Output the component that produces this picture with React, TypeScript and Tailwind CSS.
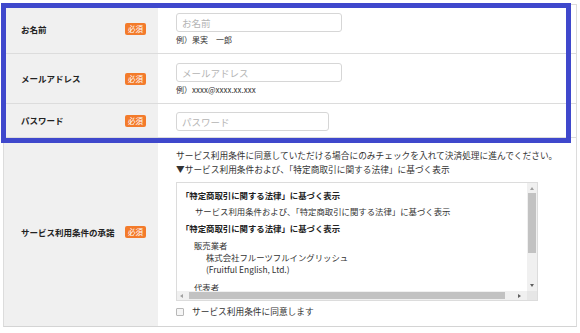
import React from 'react'

const font = "font-['Noto_Sans_CJK_JP','Noto_Sans',sans-serif]"

function Badge() {
  return (
    <span className="inline-flex items-center justify-center w-[21px] h-[12px] rounded-[2px] bg-[#f37b2b] text-white text-[7.5px] leading-none">
      必須
    </span>
  )
}

function Label({ text }: { text: string }) {
  return (
    <div className="w-[154px] shrink-0 bg-[#f0f0f0] flex items-center justify-between pl-[17px] pr-[12px]">
      <span className="text-[8.5px] font-bold text-[#222]">{text}</span>
      <Badge />
    </div>
  )
}

function Field({ placeholder, width }: { placeholder: string; width: string }) {
  return (
    <input
      readOnly
      placeholder={placeholder}
      className={`${width} h-[19px] border border-[#d6d6d6] rounded-[3px] px-[5px] text-[9.5px] placeholder:text-[#b4b4b4] outline-none bg-white`}
    />
  )
}

export default function App() {
  return (
    <div className={`relative w-[580px] h-[333px] bg-white pl-[3px] pt-[4px] text-[#333] ${font}`}>
      <div className="w-[574px] border border-[#dcdcdc] border-b-[#d4d4d4]">
        <div className="flex h-[49px] border-b border-[#dcdcdc]">
          <Label text="お名前" />
          <div className="flex flex-col pl-[18px] pt-[8px]">
            <Field placeholder="お名前" width="w-[166px]" />
            <span className="text-[8px] mt-[2px] leading-[12px]">例）果実　一郎</span>
          </div>
        </div>
        <div className="flex h-[50px] border-b border-[#dcdcdc]">
          <Label text="メールアドレス" />
          <div className="flex flex-col pl-[18px] pt-[9px]">
            <Field placeholder="メールアドレス" width="w-[166px]" />
            <span className="text-[8px] mt-[2px] leading-[12px]">例）xxxx@xxxx.xx.xxx</span>
          </div>
        </div>
        <div className="flex h-[34px] border-b border-[#dcdcdc]">
          <Label text="パスワード" />
          <div className="flex items-center pl-[18px] pt-[2px]">
            <Field placeholder="パスワード" width="w-[153px]" />
          </div>
        </div>
        <div className="flex h-[188px]">
          <Label text="サービス利用条件の承諾" />
          <div className="flex flex-col pl-[18px] pt-[11px] text-[8.7px] leading-[14px]">
            <p>サービス利用条件に同意していただける場合にのみチェックを入れて決済処理に進んでください。</p>
            <p>▼サービス利用条件および、「特定商取引に関する法律」に基づく表示</p>
            <div className="relative mt-[5px] w-[362px] h-[119px] border border-[#dcdcdc] overflow-hidden bg-white">
              <div className="pl-[4px] pt-[5px] text-[8.4px] leading-[12px]">
                <p className="font-bold text-[#222] leading-[14px]">「特定商取引に関する法律」に基づく表示</p>
                <p className="pl-[14px] mt-[3px]">サービス利用条件および、「特定商取引に関する法律」に基づく表示</p>
                <p className="font-bold text-[#222] leading-[14px] mt-[4px]">「特定商取引に関する法律」に基づく表示</p>
                <p className="pl-[13px] mt-[4px]">販売業者</p>
                <p className="pl-[25px]">株式会社フルーツフルイングリッシュ</p>
                <p className="pl-[25px]">(Fruitful English, Ltd.)</p>
                <p className="pl-[13px] mt-[6px]">代表者</p>
              </div>
              <div className="absolute right-0 top-0 w-[10px] h-[109px] bg-[#f0f0f0] flex flex-col items-center">
                <span className="mt-[4px] w-0 h-0 border-l-[2.5px] border-r-[2.5px] border-b-[3px] border-l-transparent border-r-transparent border-b-[#a0a0a0]" />
                <div className="mt-[3px] w-[8px] h-[60px] bg-[#c2c2c2]" />
                <span className="mt-auto mb-[5px] w-0 h-0 border-l-[2.5px] border-r-[2.5px] border-t-[3px] border-l-transparent border-r-transparent border-t-[#606060]" />
              </div>
              <div className="absolute left-0 bottom-0 w-[352px] h-[9px] bg-[#f0f0f0] flex items-center">
                <span className="ml-[3px] w-0 h-0 border-t-[2.5px] border-b-[2.5px] border-r-[3px] border-t-transparent border-b-transparent border-r-[#a0a0a0]" />
                <div className="ml-[6px] w-[316px] h-[7px] bg-[#c2c2c2]" />
                <span className="ml-auto mr-[8px] w-0 h-0 border-t-[2.5px] border-b-[2.5px] border-l-[3px] border-t-transparent border-b-transparent border-l-[#606060]" />
              </div>
              <div className="absolute right-0 bottom-0 w-[10px] h-[9px] bg-[#e6e6e6]" />
            </div>
            <label className="flex items-center mt-[4px]">
              <span className="w-[8px] h-[8px] border border-[#b8b8b8] rounded-[1px] bg-[#f6f6f6]" />
              <span className="ml-[8px]">サービス利用条件に同意します</span>
            </label>
          </div>
        </div>
      </div>
      <div className="absolute left-[1px] top-[3px] w-[570px] h-[140px] border-[5px] border-[#3f48cc] pointer-events-none" />
    </div>
  )
}
